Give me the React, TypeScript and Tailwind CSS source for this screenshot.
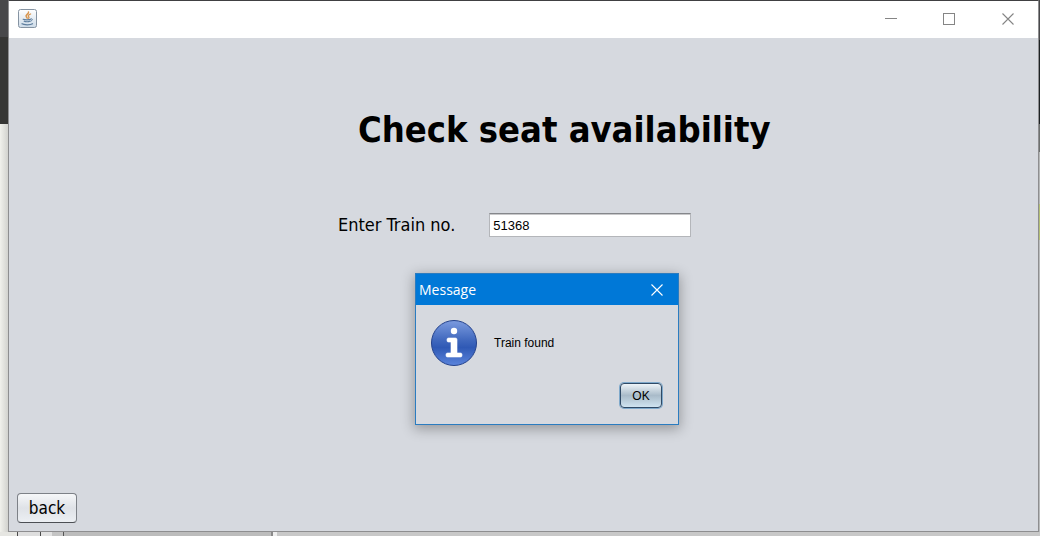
import React from "react";

function JavaIcon() {
  return (
    <svg viewBox="0 0 20 20" className="size-5" aria-hidden="true">
      <defs>
        <linearGradient id="tile" x1="0" y1="0" x2="0" y2="1">
          <stop offset="0" stopColor="#ffffff" />
          <stop offset="1" stopColor="#cddbe8" />
        </linearGradient>
      </defs>
      <rect x="1.5" y="0.5" width="18" height="18" rx="2" fill="url(#tile)" stroke="#8593a2" />
      <g fill="none" strokeLinecap="round">
        <path d="M11.500 3c.8 1.800-3.400 2.600-2.300 4.600.3.6.9.9 1 1.600" stroke="#d8954e" strokeWidth="1.5" />
        <path d="M13.600 5c-2.400 1-3 1.700-1.800 2.900.4.5.2.9-.3 1.300" stroke="#d8954e" strokeWidth="1.3" />
        <path d="M6.200 10.300c1.500.7 6 .7 7.400 0M7.200 12.200c1.300.7 4.400.7 5.500 0" stroke="#5f7f9f" strokeWidth="1.2" />
        <path d="M14 9.800c2-.5 2 1.800-.5 2.400" stroke="#5f7f9f" />
        <path d="M5 14.800c1.600 1.300 8.700 1.300 10.500 0" stroke="#5f7f9f" strokeWidth="1.300" />
      </g>
    </svg>
  );
}

function InfoIcon() {
  return (
    <svg viewBox="0 0 48 48" className="size-12 shrink-0" aria-hidden="true">
      <defs>
        <linearGradient id="ball" x1="0" y1="0" x2="0" y2="1">
          <stop offset="0" stopColor="#7c9bdf" />
          <stop offset="0.45" stopColor="#3f67bd" />
          <stop offset="0.6" stopColor="#2f59b5" />
          <stop offset="1" stopColor="#5b84dc" />
        </linearGradient>
      </defs>
      <circle cx="24" cy="24" r="22.5" fill="url(#ball)" stroke="#24428c" />
      <circle cx="24" cy="12" r="3.2" fill="#fff" />
      <path
        d="M18.5 19h7q1.500 0 1.500 1.500V34h3.500q1.500 0 1.500 1.500v1q0 1.500-1.500 1.500h-13q-1.500 0-1.500-1.500v-1q0-1.500 1.500-1.500H21V23h-2.500q-1.500 0-1.500-1.500v-1q0-1.500 1.500-1.500z"
        fill="#fff"
        stroke="#fff"
        strokeWidth="0.6"
      />
    </svg>
  );
}

function CloseGlyph() {
  return (
    <svg viewBox="0 0 12 12" className="size-3" fill="none" stroke="currentColor" aria-hidden="true">
      <path d="M0.500 0.500l11 11M11.500 0.500l-11 11" strokeWidth="1.1" />
    </svg>
  );
}

function TitleBar() {
  return (
    <header className="flex h-[37px] shrink-0 items-center justify-between bg-white pb-0.5 pl-2">
      <JavaIcon />
      <div className="flex h-full text-[#858585]">
        <button type="button" aria-label="Minimize" className="flex w-[58px] items-center justify-center">
          <svg viewBox="0 0 12 12" className="size-3" stroke="currentColor" aria-hidden="true">
            <path d="M0 5.500h12" />
          </svg>
        </button>
        <button type="button" aria-label="Maximize" className="flex w-[58px] items-center justify-center">
          <svg viewBox="0 0 12 12" className="size-3" fill="none" stroke="currentColor" aria-hidden="true">
            <rect x="0.5" y="0.5" width="11" height="11" />
          </svg>
        </button>
        <button type="button" aria-label="Close" className="flex w-[60px] items-center justify-center">
          <CloseGlyph />
        </button>
      </div>
    </header>
  );
}

function MessageDialog() {
  return (
    <section
      role="dialog"
      aria-labelledby="dialog-title"
      className="absolute top-[235px] left-[406px] w-[264px] border border-[#2b7cc0] bg-[#d6d9df] shadow-[0_3px_12px_1px_rgba(0,0,0,0.3)]"
    >
      <div className="flex h-[31px] items-center justify-between bg-[#0078d7] pr-[15px] pl-[3px] text-white">
        <h2 id="dialog-title" className="font-['Open_Sans','Noto_Sans',sans-serif] text-[14px]">
          Message
        </h2>
        <button type="button" aria-label="Close message">
          <CloseGlyph />
        </button>
      </div>
      <div className="flex items-center gap-4 pt-3.5 pl-3.5">
        <InfoIcon />
        <p className="font-['Liberation_Sans',Arial,sans-serif] text-[12px]">Train found</p>
      </div>
      <div className="flex justify-end pt-4 pr-4 pb-4">
        <button
          type="button"
          className="h-[25px] w-[42px] rounded border border-[#2f4a66] bg-linear-to-b from-[#eef4f8] via-[#a9bbc9] to-[#cfe3f0] font-['Liberation_Sans',Arial,sans-serif] text-[12px] shadow-[0_0_0_1px_#7fa9cb]"
        >
          OK
        </button>
      </div>
    </section>
  );
}

export default function App() {
  return (
    <div className="grid min-h-screen grid-cols-[8px_1fr_1px] grid-rows-[1fr_4px] bg-[#c6c6c6] font-['DejaVu_Sans_Condensed','DejaVu_Sans',sans-serif] text-black">
      <div className="flex flex-col">
        <div className="h-[37px] bg-[#48484a]" />
        <div className="h-[87px] bg-[#363634]" />
        <div className="grow bg-linear-to-r from-[#f1f1ec] to-[#d2d2ce]" />
      </div>

      <main className="flex flex-col border border-[#8e8e90] border-t-[#404042] bg-[#d6d9df]">
        <TitleBar />
        <div className="relative flex grow flex-col items-start">
          <h1 className="pt-[69px] pl-[349px] text-[36px] leading-[46px] font-bold whitespace-nowrap">
            Check seat availability
          </h1>
          <form className="flex items-center gap-[34px] pt-[60px] pl-[329px]" onSubmit={(e) => e.preventDefault()}>
            <label htmlFor="train" className="text-[18px] leading-[22px] whitespace-nowrap">
              Enter Train no.
            </label>
            <input
              id="train"
              type="text"
              defaultValue="51368"
              className="h-6 w-[202px] border border-[#b4b6ba] border-t-[#85878b] bg-white px-[3px] font-['Liberation_Sans',Arial,sans-serif] text-[13px] shadow-[inset_0_1px_0_#c8c8ca] outline-none"
            />
          </form>
          <button
            type="button"
            className="mt-auto mb-2 ml-2 h-[30px] w-[60px] rounded border border-[#7d8187] border-b-[#4c4f54] bg-linear-to-b from-[#f6f7f9] via-[#dfe2e7] to-[#eceff3] text-[17px] leading-6"
          >
            back
          </button>
          <MessageDialog />
        </div>
      </main>

      <div className="flex flex-col">
        <div className="h-10 bg-[#48484a]" />
        <div className="h-[84px] bg-[#1e2224]" />
        <div className="h-7 bg-[#6d706f]" />
        <div className="h-[52px] bg-[#b5b7b7]" />
        <div className="h-9 bg-[#b4bf74]" />
        <div className="grow bg-[#b9bbbc]" />
      </div>

      <div className="col-span-3 flex">
        <div className="w-[17px] bg-[#e6e6e2]" />
        <div className="w-6 border-x border-[#4a4a4a] bg-[#dedede]" />
        <div className="w-[11px] bg-[#e2e2e2]" />
        <div className="w-[11px] bg-[#c4c4c4]" />
        <div className="w-[210px] border-r-2 border-l border-[#555555] border-r-[#8a8a8a] bg-[#bcbcbc]" />
        <div className="w-1 bg-[#eeeeee]" />
        <div className="grow bg-[#c8c8c8]" />
      </div>
    </div>
  );
}
